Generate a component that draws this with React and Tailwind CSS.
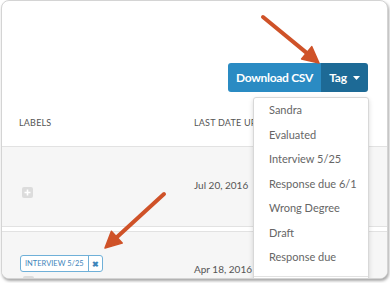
import React from 'react'

const tags = ['Sandra', 'Evaluated', 'Interview 5/25', 'Response due 6/1', 'Wrong Degree', 'Draft', 'Response due']

const PlusBox = () => (
    <div className="w-[11px] h-[11px] rounded-[2px] bg-[#dcdcdc] flex items-center justify-center">
        <svg width="7" height="7" viewBox="0 0 7 7">
            <path d="M3.5 0.5v6M0.5 3.5h6" stroke="#fff" strokeWidth="1.6" />
        </svg>
    </div>
)

const Arrow = ({ x1, y1, x2, y2 }) => {
    const a = Math.atan2(y2 - y1, x2 - x1)
    const len = 16
    const w = 8
    const bx = x2 - Math.cos(a) * len
    const by = y2 - Math.sin(a) * len
    const px = -Math.sin(a) * w
    const py = Math.cos(a) * w
    return (
        <g>
            <line x1={x1} y1={y1} x2={bx} y2={by} stroke="#cf5228" strokeWidth="4" strokeLinecap="round" />
            <polygon points={`${x2},${y2} ${bx + px},${by + py} ${bx - px},${by - py}`} fill="#cf5228" stroke="#cf5228" strokeWidth="1.5" strokeLinejoin="round" />
        </g>
    )
}

export default function App() {
    return (
        <div className="relative w-[390px] h-[283px] bg-white overflow-hidden" style={{ fontFamily: 'Lato, "Open Sans", sans-serif' }}>
            <div className="relative ml-[1px] w-[387px] h-[279px] rounded-[8px] border border-[#d4d4d4] bg-white overflow-hidden shadow-[1px_2px_3px_rgba(0,0,0,0.35)] flex flex-col">
                <div className="shrink-0 flex justify-end pt-[62px] pr-[19px]">
                    <div className="flex h-[29px] rounded-[3px] overflow-hidden text-white font-bold text-[12px] tracking-[-0.3px]">
                        <div className="w-[93px] bg-[#2a8bc3] flex items-center justify-center">Download CSV</div>
                        <div className="w-[47px] bg-[#1d6a96] flex items-center justify-center gap-[6px]">
                            Tag
                            <svg width="7" height="4" viewBox="0 0 7 4"><path d="M0 0h7L3.5 4z" fill="#fff" /></svg>
                        </div>
                    </div>
                </div>
                <div className="shrink-0 h-[55px] flex items-center pt-[8px] text-[9px] text-[#555] tracking-[0.2px] border-b border-[#e2e2e2]">
                    <span className="ml-[17px] w-[175px]">LABELS</span>
                    <span className="w-[59px] overflow-hidden whitespace-nowrap">LAST DATE UPDATED</span>
                </div>
                <div className="shrink-0 h-[80px] bg-[#f6f6f6] flex items-start border-b border-[#e2e2e2]">
                    <div className="ml-[20px] w-[172px] mt-[40px]"><PlusBox /></div>
                    <span className="text-[10px] leading-[15px] text-[#555] mt-[31px]">Jul 20, 2016</span>
                </div>
                <div className="shrink-0 h-[5px] bg-white border-b border-[#e2e2e2]" />
                <div className="flex-1 min-h-0 bg-[#f6f6f6] flex flex-col">
                    <div className="shrink-0 flex items-start">
                        <div className="ml-[18px] w-[174px] mt-[23px] flex flex-col">
                            <div className="flex self-start h-[17px] border border-[#6fb0d8] rounded-[3px] bg-white text-[#3f86bb] text-[7.5px]">
                                <span className="px-[4px] flex items-center border-r border-[#6fb0d8]">INTERVIEW 5/25</span>
                                <span className="w-[13px] flex items-center justify-center font-bold text-[8px]">✖</span>
                            </div>
                            <div className="ml-[3px] mt-[4px]"><PlusBox /></div>
                        </div>
                        <span className="text-[10px] leading-[15px] text-[#555] mt-[30px]">Apr 18, 2016</span>
                    </div>
                </div>
                <div className="absolute left-[251px] top-[96px] w-[116px] h-[200px] bg-white border border-[#d8d8d8] rounded-[3px] shadow-[0_2px_5px_rgba(0,0,0,0.15)]">
                    {tags.map((t) => (
                        <div key={t} className="h-[24.5px] flex items-center pl-[15px] text-[11px] text-[#666]">{t}</div>
                    ))}
                    <div className="mt-[6px] border-t border-[#e2e2e2]" />
                </div>
            </div>
            <svg className="absolute left-0 top-0" width="390" height="283">
                <Arrow x1={263} y1={17} x2={319} y2={63} />
                <Arrow x1={164} y1={194} x2={105} y2={248} />
            </svg>
        </div>
    )
}
